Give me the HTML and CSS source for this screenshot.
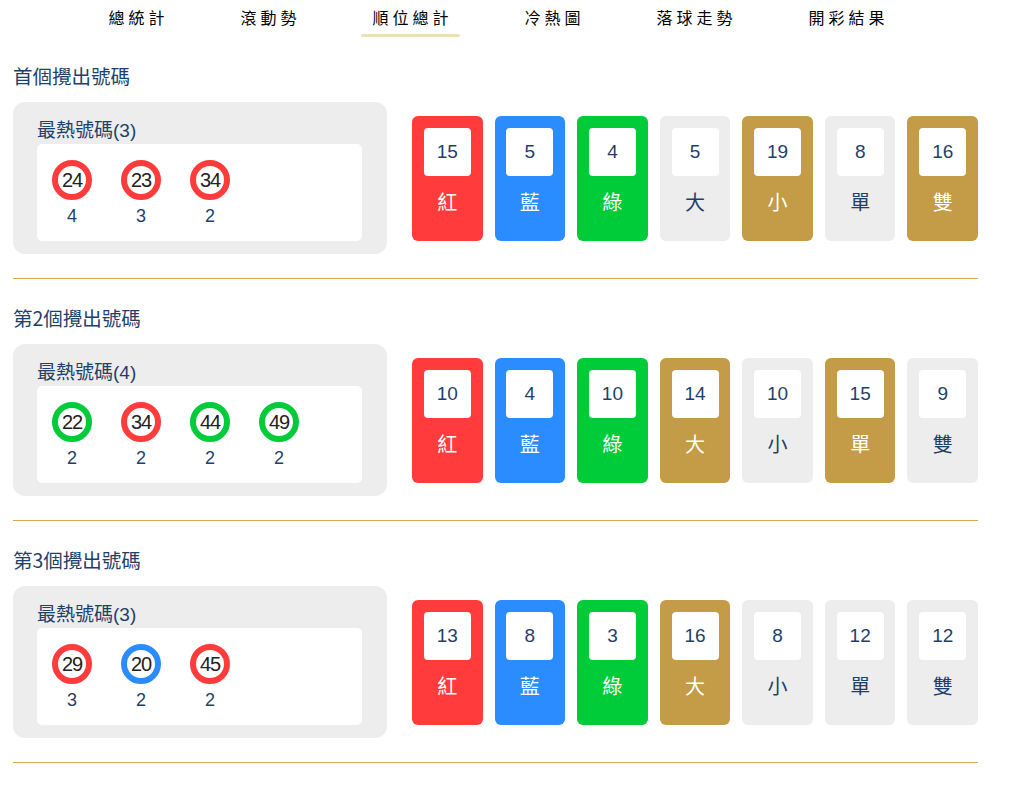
FILE: index.html
```html
<!DOCTYPE html>
<html lang="zh-Hant">
<head>
<meta charset="utf-8">
<title>順位總計</title>
<link rel="stylesheet" href="styles.css">
</head>
<body>
<div class="page">
  <nav class="nav">
    <a class="nav-item">總統計</a>
    <a class="nav-item">滾動勢</a>
    <a class="nav-item active">順位總計</a>
    <a class="nav-item">冷熱圖</a>
    <a class="nav-item">落球走勢</a>
    <a class="nav-item">開彩結果</a>
  </nav>

  <section class="section">
    <h2 class="title">首個攪出號碼</h2>
    <div class="row">
      <div class="hot">
        <div class="hot-title">最熱號碼(3)</div>
        <div class="hot-list">
          <div class="hot-item"><div class="ball red">24</div><div class="count">4</div></div>
          <div class="hot-item"><div class="ball red">23</div><div class="count">3</div></div>
          <div class="hot-item"><div class="ball red">34</div><div class="count">2</div></div>
        </div>
      </div>
      <div class="cards">
        <div class="card c-red"><div class="num">15</div><div class="label">紅</div></div>
        <div class="card c-blue"><div class="num">5</div><div class="label">藍</div></div>
        <div class="card c-green"><div class="num">4</div><div class="label">綠</div></div>
        <div class="card c-gray"><div class="num">5</div><div class="label">大</div></div>
        <div class="card c-gold"><div class="num">19</div><div class="label">小</div></div>
        <div class="card c-gray"><div class="num">8</div><div class="label">單</div></div>
        <div class="card c-gold"><div class="num">16</div><div class="label">雙</div></div>
      </div>
    </div>
  </section>

  <section class="section">
    <h2 class="title">第2個攪出號碼</h2>
    <div class="row">
      <div class="hot">
        <div class="hot-title">最熱號碼(4)</div>
        <div class="hot-list">
          <div class="hot-item"><div class="ball green">22</div><div class="count">2</div></div>
          <div class="hot-item"><div class="ball red">34</div><div class="count">2</div></div>
          <div class="hot-item"><div class="ball green">44</div><div class="count">2</div></div>
          <div class="hot-item"><div class="ball green">49</div><div class="count">2</div></div>
        </div>
      </div>
      <div class="cards">
        <div class="card c-red"><div class="num">10</div><div class="label">紅</div></div>
        <div class="card c-blue"><div class="num">4</div><div class="label">藍</div></div>
        <div class="card c-green"><div class="num">10</div><div class="label">綠</div></div>
        <div class="card c-gold"><div class="num">14</div><div class="label">大</div></div>
        <div class="card c-gray"><div class="num">10</div><div class="label">小</div></div>
        <div class="card c-gold"><div class="num">15</div><div class="label">單</div></div>
        <div class="card c-gray"><div class="num">9</div><div class="label">雙</div></div>
      </div>
    </div>
  </section>

  <section class="section">
    <h2 class="title">第3個攪出號碼</h2>
    <div class="row">
      <div class="hot">
        <div class="hot-title">最熱號碼(3)</div>
        <div class="hot-list">
          <div class="hot-item"><div class="ball red">29</div><div class="count">3</div></div>
          <div class="hot-item"><div class="ball blue">20</div><div class="count">2</div></div>
          <div class="hot-item"><div class="ball red">45</div><div class="count">2</div></div>
        </div>
      </div>
      <div class="cards">
        <div class="card c-red"><div class="num">13</div><div class="label">紅</div></div>
        <div class="card c-blue"><div class="num">8</div><div class="label">藍</div></div>
        <div class="card c-green"><div class="num">3</div><div class="label">綠</div></div>
        <div class="card c-gold"><div class="num">16</div><div class="label">大</div></div>
        <div class="card c-gray"><div class="num">8</div><div class="label">小</div></div>
        <div class="card c-gray"><div class="num">12</div><div class="label">單</div></div>
        <div class="card c-gray"><div class="num">12</div><div class="label">雙</div></div>
      </div>
    </div>
  </section>
</div>
</body>
</html>
```

FILE: styles.css
```css
* { box-sizing: border-box; }
html, body { margin: 0; padding: 0; background: #fff; }
body {
  font-family: "Liberation Sans", Arial, "Noto Sans CJK TC", sans-serif;
  color: #1f3f6b;
}
.page {
  width: 965px;
  margin-left: 13px;
}
.nav {
  display: flex;
  justify-content: center;
  gap: 72px;
  height: 37px;
  padding-left: 6px;
}
.nav-item {
  position: relative;
  font-family: "Noto Sans CJK TC", sans-serif;
  font-size: 16px;
  font-weight: 400;
  letter-spacing: 4px;
  line-height: 34px;
  color: #000;
  height: 37px;
}
.nav-item.active::after {
  content: "";
  position: absolute;
  left: -11px;
  right: -7px;
  bottom: 0;
  height: 3px;
  border-radius: 2px;
  background: #efdfb8;
}
.section {
  padding-top: 27px;
  padding-bottom: 24px;
  border-bottom: 1px solid #d6a853;
}
.section + .section { padding-top: 27px; }
.title {
  margin: 0 0 14px;
  font-family: "Noto Sans CJK TC", sans-serif;
  font-size: 19.5px;
  font-weight: 400;
  line-height: 24px;
  color: #1f3f6b;
}
.row {
  display: flex;
  align-items: center;
  gap: 25px;
}
.hot {
  width: 374px;
  flex: none;
  background: #ededed;
  border-radius: 12px;
  padding: 17px 25px 13px 24px;
}
.hot-title {
  font-family: "Liberation Sans", Arial, "Noto Sans CJK TC", sans-serif;
  font-size: 19px;
  line-height: 23px;
  margin-bottom: 2px;
  color: #1f3f6b;
}
.hot-list {
  background: #fff;
  border-radius: 5px;
  display: flex;
  gap: 29px;
  padding: 16px 15px 15px;
}
.hot-item {
  width: 40px;
  display: flex;
  flex-direction: column;
  align-items: center;
}
.ball {
  width: 40px;
  height: 40px;
  border-radius: 50%;
  border: 6.5px solid #ff3b3b;
  background: #fff;
  display: flex;
  align-items: center;
  justify-content: center;
  font-size: 20px;
  color: #222;
  letter-spacing: -1px;
}
.ball.red { border-color: #ff3b3b; }
.ball.green { border-color: #00cc3a; }
.ball.blue { border-color: #2a8cff; }
.count {
  margin-top: 6px;
  font-size: 18px;
  line-height: 20px;
  color: #1f3f6b;
}
.cards {
  flex: 1;
  display: flex;
  gap: 12px;
}
.card {
  flex: 1;
  height: 125px;
  border-radius: 6px;
  padding-top: 12px;
  display: flex;
  flex-direction: column;
  align-items: center;
}
.num {
  width: 47px;
  height: 48px;
  background: #fff;
  border-radius: 4px;
  font-size: 19px;
  line-height: 48px;
  text-align: center;
  color: #1f3f6b;
}
.label {
  margin-top: 14px;
  font-family: "Noto Sans CJK TC", sans-serif;
  font-size: 20px;
  line-height: 24px;
  color: #fff;
}
.c-red { background: #ff3b3b; }
.c-blue { background: #2a8cff; }
.c-green { background: #00cc3a; }
.c-gold { background: #c49b47; }
.c-gray { background: #ededed; }
.c-gray .label { color: #1f3f6b; }
```
